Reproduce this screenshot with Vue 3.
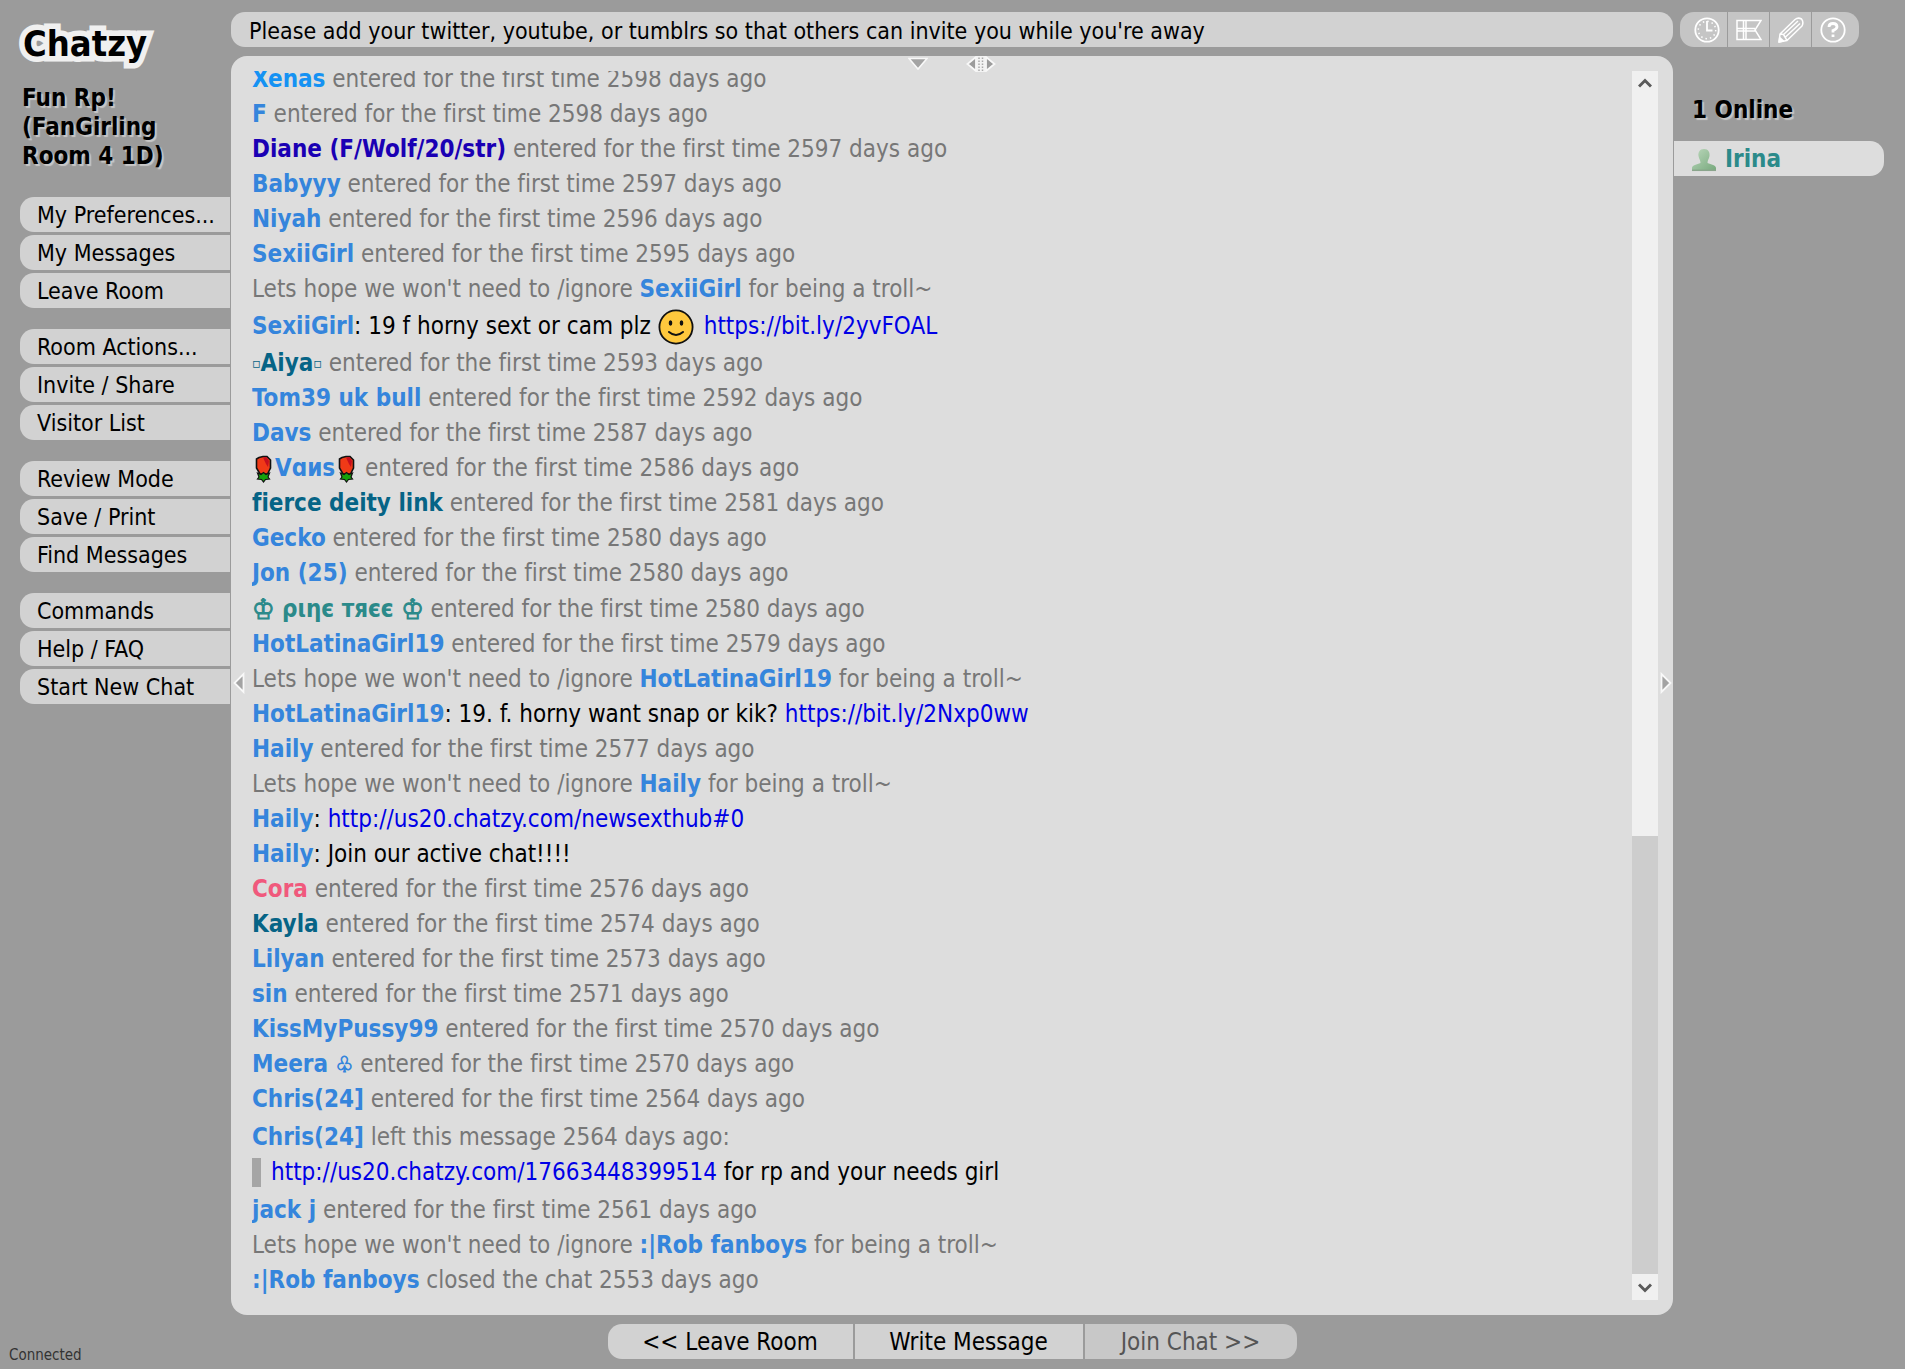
<script setup>
import { ref } from 'vue'

const topic = ref("Please add your twitter, youtube, or tumblrs so that others can invite you while you're away")

const menu = [
  ['My Preferences...', 'My Messages', 'Leave Room'],
  ['Room Actions...', 'Invite / Share', 'Visitor List'],
  ['Review Mode', 'Save / Print', 'Find Messages'],
  ['Commands', 'Help / FAQ', 'Start New Chat'],
]

const BLUE = 'blue'
const entered = (name, days, color = BLUE) => ({
  parts: [{ name, color }, { text: ` entered for the first time ${days} days ago` }],
})
// Names decorated with symbols; each piece is [text, extra class].
const enteredDecorated = (pieces, days, color, extra = {}) => ({
  parts: [
    ...pieces.map(([name, symbol = '']) => ({ name, color: [color, symbol] })),
    { text: ` entered for the first time ${days} days ago` },
  ],
  ...extra,
})
const troll = (name) => ({
  parts: [{ text: "Lets hope we won't need to /ignore " }, { name, color: BLUE }, { text: ' for being a troll~' }],
})
const said = (name, ...parts) => ({ said: true, parts: [{ name, color: BLUE }, { text: ': ' }, ...parts] })

const log = [
  entered('Xenas', 2598, 'sky'),
  entered('F', 2598),
  entered('Diane (F/Wolf/20/str)', 2597, 'navy'),
  entered('Babyyy', 2597),
  entered('Niyah', 2596),
  entered('SexiiGirl', 2595),
  troll('SexiiGirl'),
  { ...said('SexiiGirl', { text: '19 f horny sext or cam plz ' }, { smiley: true }, { link: 'https://bit.ly/2yvFOAL' }), tall: true },
  enteredDecorated([['▫', 'small'], ['Aiya'], ['▫', 'small']], 2593, 'petrol'),
  entered('Tom39 uk bull', 2592),
  entered('Davs', 2587),
  { parts: [{ rose: true }, { name: 'Vɑиs', color: BLUE }, { rose: true }, { text: ' entered for the first time 2586 days ago' }] },
  entered('fierce deity link', 2581, 'petrol'),
  entered('Gecko', 2580),
  entered('Jon (25)', 2580),
  enteredDecorated([['♔', 'crown'], [' ριηє тяєє '], ['♔', 'crown']], 2580, 'teal', { crowned: true }),
  entered('HotLatinaGirl19', 2579),
  troll('HotLatinaGirl19'),
  said('HotLatinaGirl19', { text: '19. f. horny want snap or kik? ' }, { link: 'https://bit.ly/2Nxp0ww' }),
  entered('Haily', 2577),
  troll('Haily'),
  said('Haily', { link: 'http://us20.chatzy.com/newsexthub#0' }),
  said('Haily', { text: 'Join our active chat!!!!' }),
  entered('Cora', 2576, 'pink'),
  entered('Kayla', 2574, 'petrol'),
  entered('Lilyan', 2573),
  entered('sin', 2571),
  entered('KissMyPussy99', 2570),
  enteredDecorated([['Meera '], ['♧', 'club']], 2570, BLUE),
  entered('Chris(24]', 2564),
  {
    parts: [{ name: 'Chris(24]', color: BLUE }, { text: ' left this message 2564 days ago:' }],
    quote: { link: 'http://us20.chatzy.com/17663448399514', text: ' for rp and your needs girl' },
  },
  entered('jack j', 2561),
  troll(':|Rob fanboys'),
  { parts: [{ name: ':|Rob fanboys', color: BLUE }, { text: ' closed the chat 2553 days ago' }] },
]
</script>

<template>
  <div class="room">
    <aside class="left">
      <a class="logo" href="#">Chatzy</a>
      <h1 class="title">Fun Rp! (FanGirling Room 4 1D)</h1>
      <nav class="menu">
        <div v-for="(group, g) in menu" :key="g" class="group">
          <button v-for="item in group" :key="item" type="button">{{ item }}</button>
        </div>
      </nav>
      <div class="status">Connected</div>
    </aside>

    <main class="center">
      <input v-model="topic" class="topic" type="text" aria-label="Room topic" readonly />
      <section class="panel">
        <svg class="grip down" width="20" height="13" viewBox="0 0 20 13"><path d="M1 1.500H19L10 12Z" fill="#a3a3a3" stroke="#f8f8f8" stroke-width="1.600" /></svg>
        <svg class="grip split" width="30" height="16" viewBox="0 0 30 16">
          <path d="M10 1V15L1.500 8Z M20 1V15L28.500 8Z" fill="#9c9c9c" stroke="#f8f8f8" stroke-width="1.800" />
          <path d="M11 0h8v16h-8z" fill="#f3f3f3" />
          <path d="M13 1.500V15M16.500 1.500V15" stroke="#aaa" stroke-width="1.500" stroke-dasharray="1.500 1.500" />
        </svg>
        <svg class="grip west" width="12" height="22" viewBox="0 0 12 22"><path d="M10.500 2V20L1.500 11Z" fill="#a3a3a3" stroke="#f8f8f8" stroke-width="1.800" /></svg>
        <svg class="grip east" width="12" height="22" viewBox="0 0 12 22"><path d="M1.500 2V20L10.500 11Z" fill="#a3a3a3" stroke="#f8f8f8" stroke-width="1.800" /></svg>

        <div class="log">
          <div v-for="(row, i) in log" :key="i" class="entry" :class="{ said: row.said, tall: row.tall, crowned: row.crowned, quoted: row.quote }">
            <p>
              <template v-for="(part, p) in row.parts" :key="p">
                <b v-if="part.name" :class="part.color">{{ part.name }}</b>
                <a v-else-if="part.link" :href="part.link">{{ part.link }}</a>
                <svg v-else-if="part.smiley" class="smiley" width="36" height="36" viewBox="0 0 36 36">
                  <circle cx="18" cy="18" r="16.600" fill="#ffc83d" stroke="#111" stroke-width="1.800" />
                  <ellipse cx="12.500" cy="14" rx="1.800" ry="2.800" fill="#111" />
                  <ellipse cx="23.500" cy="14" rx="1.800" ry="2.800" fill="#111" />
                  <path d="M11 23Q18 29 25 23" fill="none" stroke="#111" stroke-width="2" stroke-linecap="round" />
                </svg>
                <svg v-else-if="part.rose" class="rose" width="23" height="28" viewBox="0 0 23 28">
                  <path d="M7 2.500L11 1.500H15L18.500 5V13L15.500 19H8L4.500 13V4Z" fill="#f03a17" stroke="#111" stroke-width="1.600" />
                  <path d="M11 2.500L14.500 2L17 6L16 12L14 9Z" fill="#c50f1f" />
                  <path d="M5.500 18L9 19.500L11.500 17.500L14 19.500L17.500 18L16 22L17.500 24L13.500 24.500L11.500 27L9.500 24.500L5.500 24L7 22Z" fill="#16a00c" stroke="#111" stroke-width="1.200" />
                </svg>
                <template v-else>{{ part.text }}</template>
              </template>
            </p>
            <blockquote v-if="row.quote"><a :href="row.quote.link">{{ row.quote.link }}</a>{{ row.quote.text }}</blockquote>
          </div>
        </div>

        <div class="scrollbar">
          <button type="button" aria-label="Scroll up">
            <svg width="14" height="12" viewBox="0 0 14 12"><path d="M1 8.500L7 2.500L13 8.500" fill="none" stroke="#5a5a5a" stroke-width="3" /></svg>
          </button>
          <div class="track"><div class="thumb"></div></div>
          <button type="button" aria-label="Scroll down">
            <svg width="14" height="12" viewBox="0 0 14 12"><path d="M1 3.500L7 9.500L13 3.500" fill="none" stroke="#5a5a5a" stroke-width="3" /></svg>
          </button>
        </div>
      </section>
      <div class="actions">
        <button type="button">&lt;&lt; Leave Room</button>
        <button type="button">Write Message</button>
        <button type="button" disabled>Join Chat &gt;&gt;</button>
      </div>
    </main>

    <aside class="right">
      <div class="tools">
        <button type="button" aria-label="History">
          <svg width="26" height="26" viewBox="0 0 26 26" fill="none" stroke="#fff" stroke-width="1.800">
            <circle cx="13" cy="13" r="11.700" />
            <path d="M13 4V13.500H18.500" />
            <circle cx="13" cy="13" r="8.700" stroke-width="1.500" stroke-dasharray="1.500 3.055" />
          </svg>
        </button>
        <button type="button" aria-label="Layout">
          <svg width="26" height="22" viewBox="0 0 26 22" fill="none" stroke="#fff" stroke-width="1.500">
            <path d="M1 1.500H25L19 11L25 20.500H1Z M7.500 1.500V20.500M10 1.500V20.500M1 9.500H19M1 12H19" />
          </svg>
        </button>
        <button type="button" aria-label="Edit">
          <svg width="26" height="26" viewBox="0 0 26 26" fill="none" stroke="#fff" stroke-width="1.500" stroke-linejoin="round">
            <path d="M1 25L2 17L17 2.500Q20 0 23.500 2Q26 5 24 9L9 23.500ZM2 17L5.500 17.500L7 20L9 23.500M5.500 17.500L20 4M7.500 20L22 6.500" />
            <path d="M1 25L1.700 20.500L5.500 24Z" fill="#fff" />
          </svg>
        </button>
        <button type="button" aria-label="Help">
          <svg width="26" height="26" viewBox="0 0 26 26" fill="none" stroke="#fff">
            <circle cx="13" cy="13" r="11.700" stroke-width="1.800" />
            <path d="M9 10Q9 6.500 13 6.500Q17 6.500 17 9.800Q17 12 13 13.500V15.500M13 17.500V20" stroke-width="2.800" />
          </svg>
        </button>
      </div>
      <h2>1 Online</h2>
      <button class="visitor" type="button">
        <svg width="24" height="24" viewBox="0 0 24 24">
          <defs><linearGradient id="person" x1="0" y1="0" x2="1" y2="1"><stop offset="0" stop-color="#bcd8bc" /><stop offset="1" stop-color="#76a87c" /></linearGradient></defs>
          <path d="M12 1C7.500 1 6 4.500 6.500 8C7 11 8.500 12 8.500 15C5 16.500 0 17 0 20V23H24V20C24 17 19 16.500 15.500 15C15.500 12 17 11 17.500 8C18 4.500 16.500 1 12 1Z" fill="url(#person)" />
          <path d="M0 22.300H24" stroke="#8aa58c" stroke-width="1.500" />
        </svg>
        <b>Irina</b>
      </button>
    </aside>
  </div>
</template>

<style>
body {
  margin: 0;
  background: #9b9b9b;
}
</style>

<style scoped>
.room {
  display: grid;
  grid-template-columns: 231px minmax(0, 1fr) 232px;
  height: 100vh;
  overflow: hidden;
  background: #9b9b9b;
  color: #000;
  font-family: "DejaVu Sans Condensed", "DejaVu Sans", sans-serif;
  font-size: 24px;
  font-variant-ligatures: none;
  line-height: 35px;
}
button,
input {
  box-sizing: border-box;
  margin: 0;
  border: 0;
  padding: 2px 0 0;
  background: #d2d2d2;
  color: inherit;
  font: inherit;
}
button,
.topic {
  height: 35px;
  line-height: 33px;
}
a {
  color: #0000e6;
  text-decoration: none;
}

.left {
  display: flex;
  flex-direction: column;
}
.logo {
  height: 48px;
  margin: 21px 0 0 23px;
  color: #000;
  font-size: 36px;
  font-weight: bold;
  line-height: 46px;
  -webkit-text-stroke: 11px #f0f0f0;
  paint-order: stroke fill;
  stroke-linejoin: round;
}
.title,
.right h2 {
  margin: 0;
  font-size: 24px;
  text-shadow: 2px 2px 1px #c8c8c8;
}
.title {
  margin: 15px 40px 0 22px;
  line-height: 29px;
}
.menu {
  display: flex;
  flex-direction: column;
  gap: 21px;
  margin: 26px 1px 0 20px;
}
.group {
  display: flex;
  flex-direction: column;
  gap: 3px;
}
.group button {
  padding-left: 17px;
  border-radius: 14px 0 0 14px;
  font-size: 23px;
  text-align: left;
  white-space: nowrap;
}
.status {
  margin: auto 0 4px 9px;
  color: #333;
  font-size: 15px;
  line-height: 20px;
}

.center {
  display: flex;
  flex-direction: column;
  min-height: 0;
  padding: 12px 0 10px;
}
.topic {
  flex: none;
  padding: 2px 18px 0;
  border-radius: 14px;
  outline: 0;
  font-size: 23px;
}
.panel {
  position: relative;
  display: flex;
  flex: 1;
  min-height: 0;
  margin-top: 9px;
  padding: 15px 15px 15px 21px;
  border-radius: 16px;
  background: #ddd;
}
.grip {
  position: absolute;
}
.grip.down {
  top: 1px;
  left: calc(50% - 44px);
}
.grip.split {
  top: 0;
  left: calc(50% + 14px);
}
.grip.west {
  top: calc(50% - 14px);
  left: 2px;
}
.grip.east {
  top: calc(50% - 14px);
  right: 1px;
}
.log {
  display: flex;
  flex: 1;
  flex-direction: column;
  justify-content: flex-end;
  overflow: hidden;
  padding-bottom: 2px;
  color: #777;
}
.entry {
  flex: none;
  white-space: pre;
}
.entry p {
  display: flex;
  align-items: center;
  height: 35px;
  margin: 0;
}
.entry.tall p {
  height: 39px;
}
.entry.crowned p {
  height: 36px;
}
.entry.said {
  color: #000;
}
.entry.quoted {
  padding: 3px 0;
}
blockquote {
  margin: 0;
  color: #000;
  padding-left: 19px;
  background: linear-gradient(#a5a5a5, #a5a5a5) 0 3px / 9px 29px no-repeat;
}
.smiley {
  margin: 0 10px 0 0;
}
.blue { color: #3585dc; }
.sky { color: #1592f3; }
.navy { color: #1a00b4; }
.petrol { color: #066486; }
.teal { color: #2b8a8a; }
.pink { color: #f0597c; }
.small {
  font-size: 14px;
}
.crown {
  font-size: 28px;
}
.club {
  font-size: 22px;
}
.crown,
.club {
  -webkit-text-stroke: 1px currentColor;
}

.scrollbar {
  display: flex;
  flex-direction: column;
  width: 26px;
}
.scrollbar button {
  display: grid;
  place-items: center;
  height: 26px;
  padding: 0;
  background: #f0f0f0;
}
.track {
  display: flex;
  flex: 1;
  align-items: flex-end;
  background: #f0f0f0;
}
.thumb {
  width: 100%;
  height: 37.2%;
  background: #cdcdcd;
}

.actions {
  display: grid;
  grid-template-columns: 245px 228px 212px;
  gap: 2px;
  width: 689px;
  margin: 9px auto 0;
  border-radius: 14px;
  overflow: hidden;
}
.actions button:disabled {
  background: #c8c8c8;
  color: #555;
}

.right {
  padding-top: 12px;
}
.tools {
  display: flex;
  gap: 1px;
  width: 179px;
  margin-left: 7px;
  border-radius: 14px;
  overflow: hidden;
}
.tools button {
  display: grid;
  flex: none;
  place-items: center;
  width: 41px;
  padding: 0;
  background: #c5c5c5;
}
.tools button:first-child,
.tools button:last-child {
  width: 47px;
}
.tools button:first-child {
  padding-left: 6px;
}
.tools button:last-child {
  padding-right: 6px;
}
.right h2 {
  margin: 46px 0 13px 19px;
}
.visitor {
  display: flex;
  gap: 9px;
  align-items: center;
  width: 210px;
  margin-left: 1px;
  padding-left: 18px;
  border-radius: 0 14px 14px 0;
  background: #ddd;
  color: #2b8a8a;
}
</style>
